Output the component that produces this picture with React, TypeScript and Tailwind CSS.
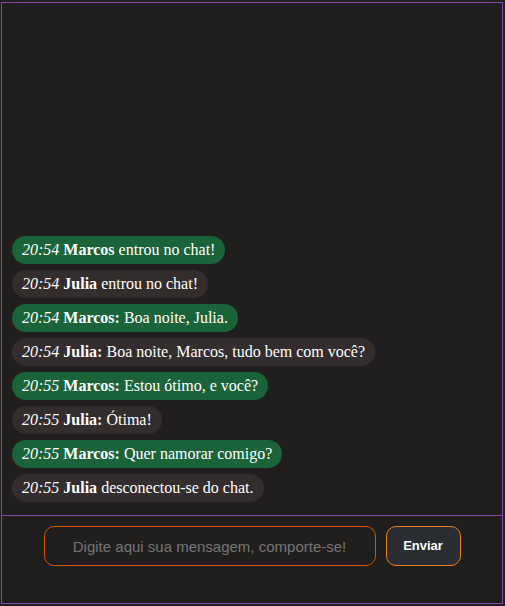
import React from "react";

type Msg = { time: string; user: string; text: string; system?: boolean };

const messages: Msg[] = [
  { time: "20:54", user: "Marcos", text: "entrou no chat!", system: true },
  { time: "20:54", user: "Julia", text: "entrou no chat!", system: true },
  { time: "20:54", user: "Marcos", text: "Boa noite, Julia." },
  { time: "20:54", user: "Julia", text: "Boa noite, Marcos, tudo bem com você?" },
  { time: "20:55", user: "Marcos", text: "Estou ótimo, e você?" },
  { time: "20:55", user: "Julia", text: "Ótima!" },
  { time: "20:55", user: "Marcos", text: "Quer namorar comigo?" },
  { time: "20:55", user: "Julia", text: "desconectou-se do chat.", system: true },
];

const App = () => {
  return (
    <div className="min-h-screen bg-[#211e1e] pl-[1px] pt-[2px]">
      <div className="w-[502px] h-[602px] border border-[#8e44ad] bg-[#211e1e] flex flex-col">
        <div className="flex-1 flex flex-col justify-end items-start gap-[6px] pl-[10px] pb-[13px] font-['Liberation_Serif',serif] text-[16px] text-white">
          {messages.map((m, i) => (
            <div
              key={i}
              className={
                m.user === "Marcos"
                  ? "rounded-full bg-[#1b643a] px-[10px] h-[28px] leading-[28px] whitespace-nowrap"
                  : "rounded-full bg-[#342d2e] px-[10px] h-[28px] leading-[28px] whitespace-nowrap"
              }
            >
              <i>{m.time}</i> <b>{m.system ? m.user : m.user + ":"}</b> {m.text}
            </div>
          ))}
        </div>
        <div className="h-[88px] border-t border-[#8e44ad] flex justify-center items-start gap-[10px] pt-[10px]">
          <input
            placeholder="Digite aqui sua mensagem, comporte-se!"
            className="w-[332px] h-[40px] rounded-[10px] border border-[#d35400] bg-[#211e1e] text-center text-[15px] text-white placeholder:text-[#757575] font-['Liberation_Sans',Arial,sans-serif] outline-none"
          />
          <button className="w-[75px] h-[40px] rounded-[10px] border border-[#e67e22] bg-[#2a2d31] text-white text-[13px] font-bold font-['Liberation_Sans',Arial,sans-serif]">
            Enviar
          </button>
        </div>
      </div>
    </div>
  );
};

export default App;
